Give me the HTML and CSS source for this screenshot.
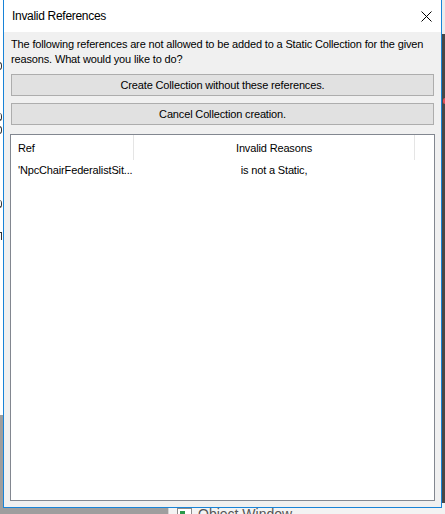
FILE: index.html
```html
<!DOCTYPE html>
<html>
<head>
<meta charset="utf-8">
<title>Invalid References</title>
<link rel="stylesheet" href="styles.css">
</head>
<body>
  <div class="bg-left">
    <span class="mark m1"></span>
    <span class="mark m2"></span>
    <span class="mark m3"></span>
    <span class="mark m4"></span>
    <span class="mark m5"></span>
  </div>
  <div class="bg-right">
    <div class="bg-right-top"></div>
    <span class="red-dot"></span>
  </div>
  <div class="taskbar">
    <span class="task-icon"><span class="task-icon-fill"></span></span>
    <span class="task-label">Object Window</span>
  </div>

  <div class="dialog">
    <div class="titlebar">
      <span class="title">Invalid References</span>
      <svg class="close" width="11" height="11" viewBox="0 0 11 11">
        <path d="M0.5 0.5 L10.5 10.5 M10.5 0.5 L0.5 10.5" stroke="#000" stroke-width="1" fill="none"/>
      </svg>
    </div>
    <div class="content">
      <p class="message">The following references are not allowed to be added to a Static Collection for the given reasons. What would you like to do?</p>
      <button class="btn">Create Collection without these references.</button>
      <button class="btn">Cancel Collection creation.</button>
      <div class="list">
        <div class="list-header">
          <div class="col col-ref">Ref</div>
          <div class="sep"></div>
          <div class="col col-reason">Invalid Reasons</div>
          <div class="sep"></div>
          <div class="col col-fill"></div>
        </div>
        <div class="list-row">
          <div class="col col-ref">'NpcChairFederalistSit...</div>
          <div class="sep sep-blank"></div>
          <div class="col col-reason">is not a Static,</div>
        </div>
      </div>
    </div>
  </div>
</body>
</html>
```

FILE: styles.css
```css
* { box-sizing: border-box; }

html, body {
  margin: 0;
  padding: 0;
}

body {
  width: 445px;
  height: 514px;
  overflow: hidden;
  position: relative;
  background: #9e9e9e;
  font-family: "Liberation Sans", Arial, sans-serif;
  font-size: 11px;
  letter-spacing: -0.15px;
  color: #000;
}

/* background desktop pieces */
.bg-left {
  position: absolute;
  left: 0;
  top: 0;
  width: 3px;
  height: 415px;
  background: #ffffff;
  overflow: hidden;
}

.mark {
  position: absolute;
  left: -2px;
  width: 4px;
  height: 8px;
  border: 1px solid #333;
  border-left: none;
  border-radius: 0 3px 3px 0;
}
.m1 { top: 62px; }
.m2 { top: 113px; border-top: none; }
.m3 { top: 126px; }
.m4 { top: 200px; border-top: none; }
.m5 { top: 232px; border-bottom: none; border-radius: 0; }

.bg-right {
  position: absolute;
  right: 0;
  top: 0;
  width: 3px;
  height: 514px;
  background: #474747;
}

.bg-right-top {
  height: 34px;
  background: #ececec;
}

.red-dot {
  position: absolute;
  top: 98px;
  left: 1px;
  width: 4px;
  height: 6px;
  border-radius: 2px;
  background: #e0505a;
}

.taskbar {
  position: absolute;
  left: 168px;
  top: 503px;
  right: 0;
  height: 22px;
  background: #f3f3f3;
  border-left: 1px solid #d4d4d4;
  display: flex;
  align-items: center;
  gap: 6px;
  padding-left: 8px;
}

.task-icon {
  width: 15px;
  height: 13px;
  border: 1px solid #8c8c8c;
  background: #fff;
  padding: 2px;
}

.task-icon-fill {
  display: block;
  width: 5px;
  height: 4px;
  background: #2a9a4a;
}

.task-label {
  font-size: 14px;
  letter-spacing: 0;
  color: #555;
}

/* dialog */
.dialog {
  position: absolute;
  left: 3px;
  top: -1px;
  width: 439px;
  height: 509px;
  border: 1px solid #1883d7;
  background: #f0f0f0;
  display: flex;
  flex-direction: column;
}

.titlebar {
  flex: none;
  height: 32px;
  background: #fff;
  display: flex;
  align-items: center;
  justify-content: space-between;
  padding: 0 9px 0 8px;
}

.title {
  font-size: 12px;
  letter-spacing: -0.3px;
  line-height: 15px;
  padding-top: 1px;
}

.close {
  display: block;
}

.content {
  flex: 1;
  display: flex;
  flex-direction: column;
  padding: 5px 6px 6px 6px;
  min-height: 0;
}

.message {
  margin: 0 0 7px 1px;
  line-height: 15px;
}

.btn {
  flex: none;
  height: 22px;
  margin: 0 1px;
  padding: 0;
  border: 1px solid #adadad;
  background: #e1e1e1;
  font: inherit;
  letter-spacing: inherit;
  color: #000;
}

.btn + .btn {
  margin-top: 7px;
}

.list {
  flex: 1;
  margin-top: 9px;
  border: 1px solid #828790;
  background: #fff;
}

.list-header {
  display: flex;
  height: 25px;
  align-items: stretch;
}

.list-row {
  display: flex;
  height: 20px;
  align-items: stretch;
}

.col {
  display: flex;
  align-items: center;
  white-space: nowrap;
}

.col-ref {
  width: 122px;
  padding-left: 7px;
}

.col-reason {
  width: 280px;
  justify-content: center;
}

.col-fill {
  flex: 1;
}

.sep {
  width: 1px;
  background: #e5e5e5;
}

.sep-blank {
  background: transparent;
}
```
